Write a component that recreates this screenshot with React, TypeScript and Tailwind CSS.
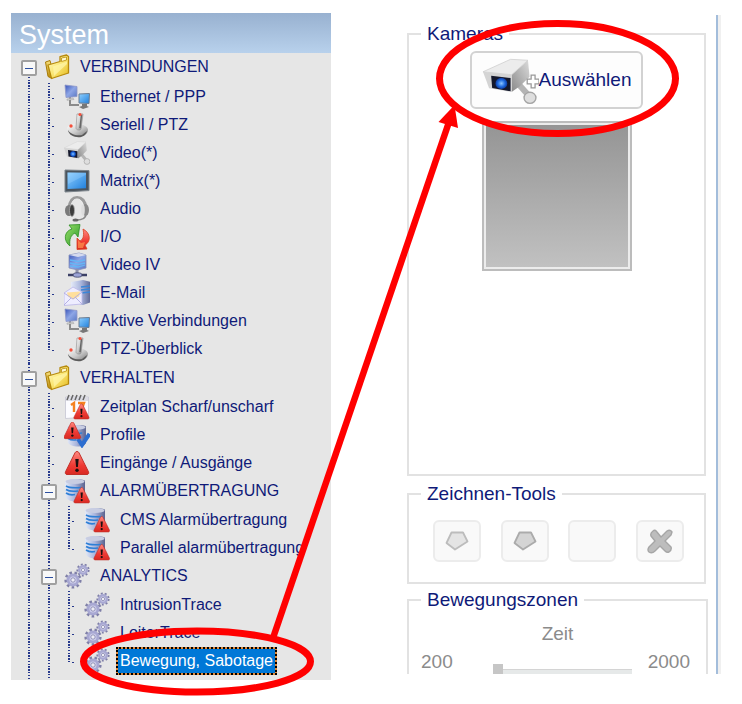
import { useState, type ReactNode } from "react";

function Defs() {
  return (
    <svg className="absolute h-0 w-0" aria-hidden="true">
      <defs>
        <linearGradient id="gold" x1="0" y1="0" x2="1" y2="1">
          <stop offset="0" stopColor="#fffbd0" />
          <stop offset="0.5" stopColor="#fbe774" />
          <stop offset="1" stopColor="#e3b71c" />
        </linearGradient>
        <linearGradient id="goldBack" x1="0" y1="0" x2="0" y2="1">
          <stop offset="0" stopColor="#f7df7c" />
          <stop offset="1" stopColor="#b98a0a" />
        </linearGradient>
        <linearGradient id="sky" x1="0" y1="0" x2="1" y2="1">
          <stop offset="0" stopColor="#8fd0ff" />
          <stop offset="1" stopColor="#1f7fdc" />
        </linearGradient>
        <linearGradient id="indigo" x1="0" y1="0" x2="1" y2="1">
          <stop offset="0" stopColor="#3853b8" />
          <stop offset="0.5" stopColor="#8ea6e6" />
          <stop offset="1" stopColor="#5a78c4" />
        </linearGradient>
        <linearGradient id="metal" x1="0" y1="0" x2="1" y2="1">
          <stop offset="0" stopColor="#ffffff" />
          <stop offset="0.5" stopColor="#cccccc" />
          <stop offset="1" stopColor="#777777" />
        </linearGradient>
        <linearGradient id="side" x1="0" y1="1" x2="1" y2="0">
          <stop offset="0" stopColor="#8a8a8a" />
          <stop offset="1" stopColor="#dcdcdc" />
        </linearGradient>
        <linearGradient id="cyl" x1="0" y1="0" x2="1" y2="0">
          <stop offset="0" stopColor="#e4eaf8" />
          <stop offset="0.5" stopColor="#a9b5dc" />
          <stop offset="1" stopColor="#5a628e" />
        </linearGradient>
        <linearGradient id="red" x1="0" y1="0" x2="0" y2="1">
          <stop offset="0" stopColor="#ff8a80" />
          <stop offset="0.6" stopColor="#ef3a34" />
          <stop offset="1" stopColor="#d92a22" />
        </linearGradient>
        <linearGradient id="green" x1="0" y1="0" x2="1" y2="1">
          <stop offset="0" stopColor="#9ade6c" />
          <stop offset="1" stopColor="#2a9a26" />
        </linearGradient>
        <radialGradient id="lens">
          <stop offset="0" stopColor="#8cc4ff" />
          <stop offset="0.6" stopColor="#1f6be0" />
          <stop offset="1" stopColor="#0d3aa0" />
        </radialGradient>
      </defs>
    </svg>
  );
}

function Icon({ children }: { children: ReactNode }) {
  return (
    <svg viewBox="0 0 26 26" className="h-[26px] w-[26px] shrink-0" aria-hidden="true">
      {children}
    </svg>
  );
}

function Folder() {
  return (
    <Icon>
      <path d="M1.500 8 6 6.500l3 11-1 7-4-2z" fill="url(#goldBack)" stroke="#a97c08" strokeWidth="1" strokeLinejoin="round" />
      <path d="M7.500 10 16 7.500V2.600l6.500-1.600 2 1.600V19L7.500 24.500 4 11z" fill="url(#gold)" stroke="#b78a0c" strokeWidth="1.300" strokeLinejoin="round" />
      <path d="m17.500 4 5-1v3l-5 1.500z" fill="#fffad0" stroke="#b78a0c" strokeWidth=".8" />
      <path d="m9 12.500 14-5V10L10 22z" fill="#fff6ae" opacity=".7" />
    </Icon>
  );
}

function Network() {
  return (
    <Icon>
      <path d="M6 13v8h9" fill="none" stroke="#8b8b8b" strokeWidth="2" />
      <path d="m1 1 12 1.500v10L2 13.500z" fill="url(#indigo)" stroke="#8f98c8" strokeWidth=".8" />
      <path d="m3 15 6-1 1 1.500-7 .8z" fill="#d6d6d6" stroke="#999" strokeWidth=".5" />
      <path d="m15 10 10.500-.5-.5 10-10-.5z" fill="url(#sky)" stroke="#6c7c90" strokeWidth="1" />
      <path d="M18 20h5v2l2 1-6 2-4-2 3-1z" fill="#777" />
    </Icon>
  );
}

function Joystick() {
  return (
    <Icon>
      <path d="M3 17c0-3 4-5 9-5 8 0 12 3 12 6 0 4-5 7-10 7S3 20 3 17z" fill="url(#metal)" />
      <path d="M4 18c2 4 8 6 14 5l5-4c-1 5-6 7-10 6-5 0-9-4-9-7z" fill="#5b5b5b" />
      <path d="m13 2 6 0-2 15c-1 2-5 1-5-1z" fill="url(#metal)" stroke="#8b8b8b" strokeWidth=".6" />
      <path d="m17.500 3-1.500 13" stroke="#666" strokeWidth="1.500" />
      <circle cx="16" cy="2.500" r="1.600" fill="#f4503c" />
      <circle cx="7" cy="14" r="1.700" fill="#f4503c" />
    </Icon>
  );
}

function CameraShape() {
  return (
    <>
      <path d="m17.500 14.500 5 6" stroke="#b4b4b4" strokeWidth="3" />
      <circle cx="23" cy="21.500" r="2.900" fill="#dedede" stroke="#a5a5a5" strokeWidth=".7" />
      <path d="m14 9.500 8-7.500.8 8.500-4.800 5-4 3z" fill="url(#side)" />
      <path d="M0 8 13.500 1.500l8.500.5-8 7.500z" fill="#ececec" stroke="#cfcfcf" strokeWidth=".4" />
      <path d="m0 8 14 1.500v9L3 16.500z" fill="#d4d4d4" />
      <path d="m4 10 9.500 1.200v6.900l-9-1.700z" fill="#14182c" />
      <circle cx="9" cy="14" r="2.900" fill="url(#lens)" />
    </>
  );
}

const VideoCamera = () => (
  <Icon>
    <CameraShape />
  </Icon>
);

function Monitor() {
  return (
    <Icon>
      <path d="m1 2 24 .6v20L1 24z" fill="#4b545d" stroke="#7d858c" strokeWidth="1" />
      <path d="m3.500 4.500 18.500.3v15.500l-18.500.8z" fill="url(#sky)" />
      <path d="m3.500 4.500 18.500.3v2L4 16z" fill="#a5d8ff" opacity=".3" />
    </Icon>
  );
}

function Headset() {
  return (
    <Icon>
      <path d="M5 12C6 4 9 1.500 13 1.500S21 4 22 12" fill="none" stroke="#9b9b9b" strokeWidth="3" />
      <path d="M7 10c1-5 3-7 6-7s5 2 6 7" fill="none" stroke="#eee" strokeWidth="1" />
      <ellipse cx="5" cy="14.500" rx="4" ry="5.500" fill="#7a7a7a" />
      <ellipse cx="8" cy="14.500" rx="2.500" ry="6" fill="#3c3c3c" stroke="#aaa" strokeWidth=".8" />
      <ellipse cx="21.500" cy="14" rx="3.500" ry="6" fill="#888" />
      <ellipse cx="19" cy="14" rx="1.800" ry="5.500" fill="#ddd" />
      <path d="M22 18c0 4-4 6-10 6" fill="none" stroke="#888" strokeWidth="1.500" />
      <ellipse cx="11.500" cy="24" rx="3" ry="1.600" fill="#666" />
    </Icon>
  );
}

function InOut() {
  return (
    <Icon>
      <path d="M6 22C-1 17 0 7 8 5L5 1l11-.5L14 13l-3-4c-4 2-6 6-5 13z" fill="url(#green)" stroke="#2d8f22" strokeWidth=".8" />
      <path d="M19 5c8 4 8 13 2 16l2 4-10 .5L13 14l3 3c4-2 4-7 3-12z" fill="url(#red)" stroke="#d8411f" strokeWidth=".8" />
      <path d="m14 16 3 3 4-1-2 6h-5z" fill="#ff9650" opacity=".7" />
    </Icon>
  );
}

function VideoServer() {
  return (
    <Icon>
      <path d="m5 3 10-2 7 2v13l-8 2-9-2z" fill="url(#indigo)" stroke="#8790b8" strokeWidth=".8" />
      <path d="m5 3 10-2 7 2-8 2z" fill="#d5daee" />
      <path d="m6 8 8 1.500 7-1.500M6 11l8 1.500 7-1.500M6 14l8 1 7-2" fill="none" stroke="#64b6f5" strokeWidth="1.300" />
      <path d="M13 17v5" stroke="#8f93ad" strokeWidth="3" />
      <path d="M4 23h19" stroke="#3c4166" strokeWidth="2.500" />
      <ellipse cx="13.500" cy="23" rx="4.500" ry="2.200" fill="#9ba3d6" stroke="#3c4166" strokeWidth=".8" />
    </Icon>
  );
}

function Mail() {
  return (
    <Icon>
      <path d="m7 2 12-2 8 2v20l-8 3-12-3z" fill="url(#cyl)" />
      <path d="m17 7 9-1M17 10l9-1M17 13l9-1" stroke="#3b86d8" strokeWidth="1.600" />
      <path d="m0 13 9-6 9 5v12L0 25.500z" fill="#eeedff" stroke="#bab6e8" strokeWidth=".8" />
      <path d="m3 12.500 13-1-1 5-6 3-5-3z" fill="#ffdf9c" />
      <path d="m0 13 9 6 9-7M0 25l7-7m11 6-7-7" fill="none" stroke="#b5b1e2" strokeWidth="1" />
    </Icon>
  );
}

function WarningShape() {
  return (
    <>
      <path d="M13 1.500c1 0 1.500.5 2 1.300l9.500 19c.5 1.500 0 2.700-1.500 2.700H3c-1.500 0-2-1.200-1.500-2.700l9.500-19c.5-.8 1-1.300 2-1.300z" fill="url(#red)" stroke="#c23029" strokeWidth="1" />
      <path d="M11.300 9h3.400l-.8 8h-1.800z" fill="#1c1010" />
      <circle cx="13" cy="20.300" r="1.700" fill="#1c1010" />
    </>
  );
}

const Warning = () => (
  <Icon>
    <WarningShape />
  </Icon>
);

function DatabaseShape() {
  return (
    <>
      <path d="M1 3.500C1 1 21 0 21 3v17c-2 5-16 5-19-.5z" fill="url(#cyl)" />
      <ellipse cx="11" cy="3.500" rx="9.500" ry="2.500" fill="#c8cde2" />
      <path d="M2 8c3 2 8 2 15 1.500M2 11.500c3 2 8 2 12 1.500M2 15c3 2 7 2 9 1.500" fill="none" stroke="#2e7fd6" strokeWidth="1.600" />
    </>
  );
}

const AlarmDatabase = () => (
  <Icon>
    <DatabaseShape />
    <g transform="translate(9 8.500) scale(.67)">
      <WarningShape />
    </g>
  </Icon>
);

function Profile() {
  return (
    <Icon>
      <g transform="translate(2 2) scale(.95)">
        <DatabaseShape />
      </g>
      <path d="m14 17 4 6 7.500-11" fill="none" stroke="#2c6ed0" strokeWidth="4" />
      <g transform="translate(-1 -1) scale(.72)">
        <WarningShape />
      </g>
    </Icon>
  );
}

function Calendar() {
  return (
    <Icon>
      <path d="M1.500 3h23v20l-23 1.500z" fill="#fbfbff" stroke="#c5c5d2" strokeWidth=".8" />
      <path d="M2 3h22v4H2z" fill="#dcdce4" />
      <path d="m3 6 2-5m2 5 2-5m2 5 2-5m2 5 2-5m2 5 2-5" stroke="#666" strokeWidth="1.500" />
      <path d="m7 11 3-2v9M14 9h6l-3 8" fill="none" stroke="#f58220" strokeWidth="2.400" />
      <g transform="translate(9 9) scale(.65)">
        <WarningShape />
      </g>
    </Icon>
  );
}

function Gears() {
  return (
    <Icon>
      <circle cx="9" cy="17" r="7.300" fill="none" stroke="#7f7fa8" strokeWidth="2.600" strokeDasharray="2.550 2.550" />
      <circle cx="9" cy="17" r="5" fill="#d2d2ee" stroke="#a8a8d2" strokeWidth="3" />
      <circle cx="9" cy="17" r="2.200" fill="#ececf4" stroke="#7f7fa8" strokeWidth=".8" />
      <circle cx="19" cy="7" r="5.600" fill="none" stroke="#7f7fa8" strokeWidth="2" strokeDasharray="1.960 1.960" />
      <circle cx="19" cy="7" r="3.800" fill="#d2d2ee" stroke="#a8a8d2" strokeWidth="2.400" />
      <circle cx="19" cy="7" r="1.700" fill="#ececf4" stroke="#7f7fa8" strokeWidth=".7" />
    </Icon>
  );
}

type Node = { label: string; icon: () => ReactNode; selected?: boolean; children?: Node[] };

const tree: Node[] = [
  {
    label: "VERBINDUNGEN",
    icon: Folder,
    children: [
      { label: "Ethernet / PPP", icon: Network },
      { label: "Seriell / PTZ", icon: Joystick },
      { label: "Video(*)", icon: VideoCamera },
      { label: "Matrix(*)", icon: Monitor },
      { label: "Audio", icon: Headset },
      { label: "I/O", icon: InOut },
      { label: "Video IV", icon: VideoServer },
      { label: "E-Mail", icon: Mail },
      { label: "Aktive Verbindungen", icon: Network },
      { label: "PTZ-Überblick", icon: Joystick },
    ],
  },
  {
    label: "VERHALTEN",
    icon: Folder,
    children: [
      { label: "Zeitplan Scharf/unscharf", icon: Calendar },
      { label: "Profile", icon: Profile },
      { label: "Eingänge / Ausgänge", icon: Warning },
      {
        label: "ALARMÜBERTRAGUNG",
        icon: AlarmDatabase,
        children: [
          { label: "CMS Alarmübertragung", icon: AlarmDatabase },
          { label: "Parallel alarmübertragung", icon: AlarmDatabase },
        ],
      },
      {
        label: "ANALYTICS",
        icon: Gears,
        children: [
          { label: "IntrusionTrace", icon: Gears },
          { label: "LoiterTrace", icon: Gears },
          { label: "Bewegung, Sabotage", icon: Gears, selected: true },
        ],
      },
    ],
  },
];

const line =
  "bg-[repeating-linear-gradient(#26388c_0_5%,transparent_5%_10%)] bg-[length:2px_28px] bg-[position:9px_0] bg-repeat-y";
const lineWithTick =
  "bg-[linear-gradient(#26388c,#26388c),repeating-linear-gradient(#26388c_0_5%,transparent_5%_10%)] bg-[length:2px_1px,2px_28px] bg-[position:13px_15px,9px_0] [background-repeat:no-repeat,repeat-y]";

function TreeItem({ node, depth, first, last }: { node: Node; depth: number; first: boolean; last: boolean }) {
  const [open, setOpen] = useState(true);
  const NodeIcon = node.icon;
  return (
    <li className="flex">
      {node.children ? (
        <div className={`w-5 shrink-0 ${line} ${depth === 0 && first ? "mt-[7px]" : "pt-[7px]"}`}>
          <button
            type="button"
            aria-label={node.label}
            aria-expanded={open}
            onClick={() => setOpen(!open)}
            className="mx-auto flex size-4 items-center justify-center rounded-[2px] border-2 border-[#a0a0a0] bg-[#f8f8f8]"
          >
            <span className={open ? "h-px w-2 bg-[#2c4fa0]" : "size-2 bg-[#2c4fa0]"} />
          </button>
        </div>
      ) : (
        <div className={`w-5 shrink-0 ${lineWithTick} ${last ? "h-4" : ""}`} />
      )}
      <div className="min-w-0 flex-1">
        <a href="#" className="flex h-7 items-center gap-[6px] pl-[5px] whitespace-nowrap">
          <NodeIcon />
          <span
            className={
              node.selected
                ? "border-2 border-dotted border-black px-[2px] leading-6 text-white [background:linear-gradient(#0078d7,#0078d7)_padding-box,#e08a3a_border-box]"
                : "px-1 leading-6"
            }
          >
            {node.label}
          </span>
        </a>
        {node.children && open && (
          <ul className={depth === 0 && first ? "pt-[2px] pb-px" : "pt-px"}>
            {node.children.map((child, i) => (
              <TreeItem
                key={child.label}
                node={child}
                depth={depth + 1}
                first={i === 0}
                last={i === node.children!.length - 1}
              />
            ))}
            {depth === 1 && last && <li className="h-[5px]" aria-hidden="true" />}
          </ul>
        )}
      </div>
    </li>
  );
}

function Group({ title, className, children }: { title: string; className: string; children: ReactNode }) {
  return (
    <fieldset className={`min-w-0 border-2 border-[#e2e2e2] ${className}`}>
      <legend className="ml-3 px-[6px] leading-6 text-[#0f1a78]">{title}</legend>
      {children}
    </fieldset>
  );
}

function Polygon({ dark }: { dark?: boolean }) {
  return (
    <svg viewBox="0 0 24 20" className="h-5 w-6" aria-hidden="true">
      <path
        d="M6.500 1.500h11.500l4.500 9L10 18.500 1.500 12z"
        fill={dark ? "#d4d4d4" : "#e4e4e4"}
        stroke={dark ? "#ababab" : "#bcbcbc"}
        strokeWidth="1.800"
        strokeLinejoin="round"
      />
    </svg>
  );
}

const toolButton =
  "flex h-[42px] w-12 items-center justify-center rounded-md border-2 border-[#ececec] bg-[#f9f9f9]";

export default function App() {
  return (
    <div className="relative flex min-h-[704px] items-start gap-[76px] bg-white pr-[21px] pl-[11px] font-['Liberation_Sans',Arial,sans-serif]">
      <Defs />

      <nav className="mt-[13px] w-80 shrink-0 bg-[#e6e6e6] text-base text-[#0f1a78]">
        <h1 className="bg-linear-to-b from-[#98b1d0] to-[#b8d1ec] pt-1 pl-2 text-[27px] leading-9 text-white">System</h1>
        <ul className="pl-2">
          {tree.map((node, i) => (
            <TreeItem key={node.label} node={node} depth={0} first={i === 0} last={i === tree.length - 1} />
          ))}
        </ul>
      </nav>

      <main className="mt-[15px] flex min-w-0 flex-1 border-r-[3px] border-[#f0f0f0] text-[19px]">
        <div className="min-w-0 flex-1 border-r-2 border-[#a3bddb] pt-[7px] pr-2">
          <Group title="Kameras" className="mr-[2px] pb-[203px]">
            <div className="flex flex-col items-center gap-3 pt-[5px]">
              <button
                type="button"
                className="flex h-[58px] items-center rounded-md border-2 border-[#d2d2d2] bg-[#fdfdfd] px-[10px] text-[#0f1a78]"
              >
                <svg viewBox="0 0 58 50" className="h-[50px] w-[57px]" aria-hidden="true">
                  <g transform="translate(1 1) scale(2.080 1.960)">
                    <CameraShape />
                  </g>
                  <path d="M50 20h4v4h4v5h-4v4h-4v-4h-4v-5h4z" fill="#fff" stroke="#999" strokeWidth="1.300" />
                </svg>
                Auswählen
              </button>
              <div className="size-[150px] border-2 border-[#bcbcbc] bg-[#ececec] p-[2px]">
                <div className="h-full bg-linear-to-b from-[#959595] to-[#c1c1c1]" />
              </div>
            </div>
          </Group>

          <Group title="Zeichnen-Tools" className="mt-[6px] mr-[2px] pb-5">
            <div className="flex justify-between pt-[14px] pr-5 pl-6">
              <button type="button" disabled aria-label="Polygon" className={toolButton}>
                <Polygon />
              </button>
              <button type="button" disabled aria-label="Polygon" className={toolButton}>
                <Polygon dark />
              </button>
              <button type="button" disabled aria-label="Werkzeug" className={toolButton} />
              <button type="button" disabled aria-label="Löschen" className={toolButton}>
                <svg viewBox="0 0 26 26" className="size-[26px]" aria-hidden="true">
                  <path
                    d="M6 3q2-2 4 1l4 5 6-6q3-2 5 1l-1 3-6 6 6 6q1 3-2 5-2 1-4-1l-5-5-5 5q-3 3-6 1-2-2 0-5l6-6-4-5q-1-3 2-5z"
                    fill="#bdbdbd"
                    stroke="#a6a6a6"
                    strokeWidth="1.400"
                    strokeLinejoin="round"
                  />
                </svg>
              </button>
            </div>
          </Group>

          <Group title="Bewegungszonen" className="mt-1 border-b-0">
            <label htmlFor="zeit" className="block pt-[10px] text-center leading-6 text-[#8b8b8b]">
              Zeit
            </label>
            <div className="flex h-7 items-end gap-4 pr-4 pl-3 leading-6 text-[#8b8b8b]">
              <span className="w-14">200</span>
              <input
                id="zeit"
                type="range"
                min={200}
                max={2000}
                defaultValue={200}
                disabled
                className="h-[10px] min-w-0 flex-1 appearance-none bg-[linear-gradient(#d4d4d4,#d4d4d4),linear-gradient(#e6e9e9,#e6e9e9)] bg-[length:100%_1px,100%_5px] bg-[position:0_5px,0_5px] bg-no-repeat [&::-webkit-slider-thumb]:size-[10px] [&::-webkit-slider-thumb]:appearance-none [&::-webkit-slider-thumb]:bg-[#c6c6c6]"
              />
              <span>2000</span>
            </div>
          </Group>
        </div>
      </main>

      <svg
        viewBox="0 0 742 704"
        className="pointer-events-none absolute top-0 left-0 h-[704px] w-[742px]"
        fill="none"
        stroke="#ff0000"
        strokeWidth="7"
        aria-hidden="true"
      >
        <ellipse cx="557.500" cy="78.500" rx="118" ry="55" />
        <ellipse cx="197" cy="661.500" rx="113.500" ry="30.500" />
        <path d="M273 638 449 122" strokeWidth="6.500" />
        <path d="m454.500 105 3.500 23-19.500-6z" fill="#ff0000" stroke="none" />
      </svg>
    </div>
  );
}
